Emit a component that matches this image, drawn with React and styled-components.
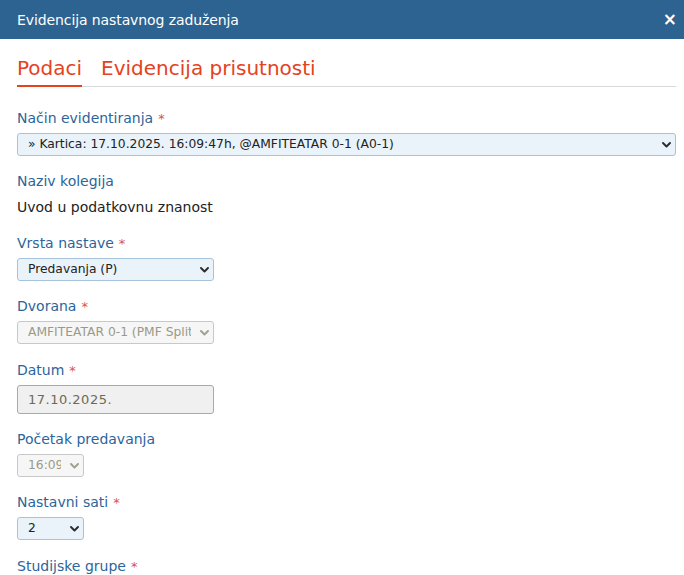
import React from 'react';
import styled, { createGlobalStyle } from 'styled-components';

const GlobalStyle = createGlobalStyle`
  body {
    margin: 0;
    background: #fff;
    font-family: "DejaVu Sans", "Liberation Sans", sans-serif;
  }
`;

const Modal = styled.div`
  width: 684px;
  height: 575px;
  overflow: hidden;
  background: #fff;
`;

const Header = styled.div`
  display: flex;
  align-items: center;
  justify-content: space-between;
  height: 39px;
  padding: 0 7px 0 17px;
  background: #2d6390;
  color: #fff;
`;

const HeaderTitle = styled.h1`
  margin: 0;
  font-size: 14px;
  font-weight: normal;
  letter-spacing: -0.1px;
`;

const CloseButton = styled.button`
  border: 0;
  background: none;
  color: #fff;
  font-family: "DejaVu Sans", sans-serif;
  font-size: 17px;
  font-weight: bold;
  line-height: 1;
  padding: 0;
  cursor: pointer;
`;

const Body = styled.div`
  padding: 15px 8px 0 17px;
`;

const Tabs = styled.div`
  display: flex;
  gap: 19px;
  border-bottom: 1px solid #d9d9d9;
  margin-bottom: 21px;
`;

const Tab = styled.div`
  font-size: 20px;
  line-height: 28px;
  color: #e5421d;
  padding-bottom: 3px;
  margin-bottom: -1px;
  border-bottom: 2px solid ${p => (p.$active ? '#e5421d' : 'transparent')};
`;

const Field = styled.div`
  margin-bottom: 15.4px;
`;

const Label = styled.div`
  height: 20px;
  font-size: 14px;
  line-height: 20px;
  color: #2c659a;
  margin-bottom: 5px;
  white-space: nowrap;
`;

const Req = styled.span`
  color: #d9534f;
  margin-left: 5px;
  font-size: 13px;
  line-height: 1;
`;

const Value = styled.div`
  font-size: 14px;
  line-height: 20px;
  color: #222;
  padding-top: 1px;
`;

const SelectWrap = styled.div`
  position: relative;
  width: ${p => p.$width};
  height: 23px;
  box-sizing: border-box;
  border: 1px solid ${p => (p.$disabled ? '#c8c8c8' : '#a6c3db')};
  border-radius: 3px;
  background: ${p => (p.$disabled ? '#f6f6f6' : '#eaf2fa')};
`;

const Select = styled.div`
  height: 21px;
  line-height: 21px;
  margin: 0 22px 0 10px;
  font-size: 12.3px;
  color: ${p => (p.$disabled ? '#9a9a88' : '#222')};
  white-space: nowrap;
  overflow: hidden;
`;

const Chevron = styled.svg`
  position: absolute;
  right: 4px;
  top: 8px;
  width: 9px;
  height: 6px;
`;

const DateInput = styled.div`
  width: 197px;
  height: 29px;
  box-sizing: border-box;
  border: 1px solid #a9a9a9;
  border-radius: 3px;
  background: #f0f0f0;
  padding: 0 10px;
  line-height: 27px;
  font-size: 13px;
  letter-spacing: 0.5px;
  color: #6b6b52;
`;

const Dropdown = ({ value, width, disabled }) => (
  <SelectWrap $width={width} $disabled={disabled}>
    <Select $disabled={disabled}>{value}</Select>
    <Chevron viewBox="0 0 9 6">
      <path
        d="M1 1l3.5 3.5L8 1"
        fill="none"
        stroke={disabled ? '#a0a090' : '#2b2b2b'}
        strokeWidth="1.9"
        strokeLinecap="round"
        strokeLinejoin="round"
      />
    </Chevron>
  </SelectWrap>
);

const App = () => (
  <Modal>
    <GlobalStyle />
    <Header>
      <HeaderTitle>Evidencija nastavnog zaduženja</HeaderTitle>
      <CloseButton>×</CloseButton>
    </Header>
    <Body>
      <Tabs>
        <Tab $active>Podaci</Tab>
        <Tab>Evidencija prisutnosti</Tab>
      </Tabs>

      <Field>
        <Label>Način evidentiranja<Req>*</Req></Label>
        <Dropdown width="659px" value="» Kartica: 17.10.2025. 16:09:47h, @AMFITEATAR 0-1 (A0-1)" />
      </Field>

      <Field>
        <Label>Naziv kolegija</Label>
        <Value>Uvod u podatkovnu znanost</Value>
      </Field>

      <Field>
        <Label>Vrsta nastave<Req>*</Req></Label>
        <Dropdown width="197px" value="Predavanja (P)" />
      </Field>

      <Field>
        <Label>Dvorana<Req>*</Req></Label>
        <Dropdown width="197px" disabled value="AMFITEATAR 0-1 (PMF Split)" />
      </Field>

      <Field>
        <Label>Datum<Req>*</Req></Label>
        <DateInput>17.10.2025.</DateInput>
      </Field>

      <Field>
        <Label>Početak predavanja</Label>
        <Dropdown width="67px" disabled value="16:09" />
      </Field>

      <Field>
        <Label>Nastavni sati<Req>*</Req></Label>
        <Dropdown width="67px" value="2" />
      </Field>

      <Field>
        <Label>Studijske grupe<Req>*</Req></Label>
      </Field>
    </Body>
  </Modal>
);

export default App;
